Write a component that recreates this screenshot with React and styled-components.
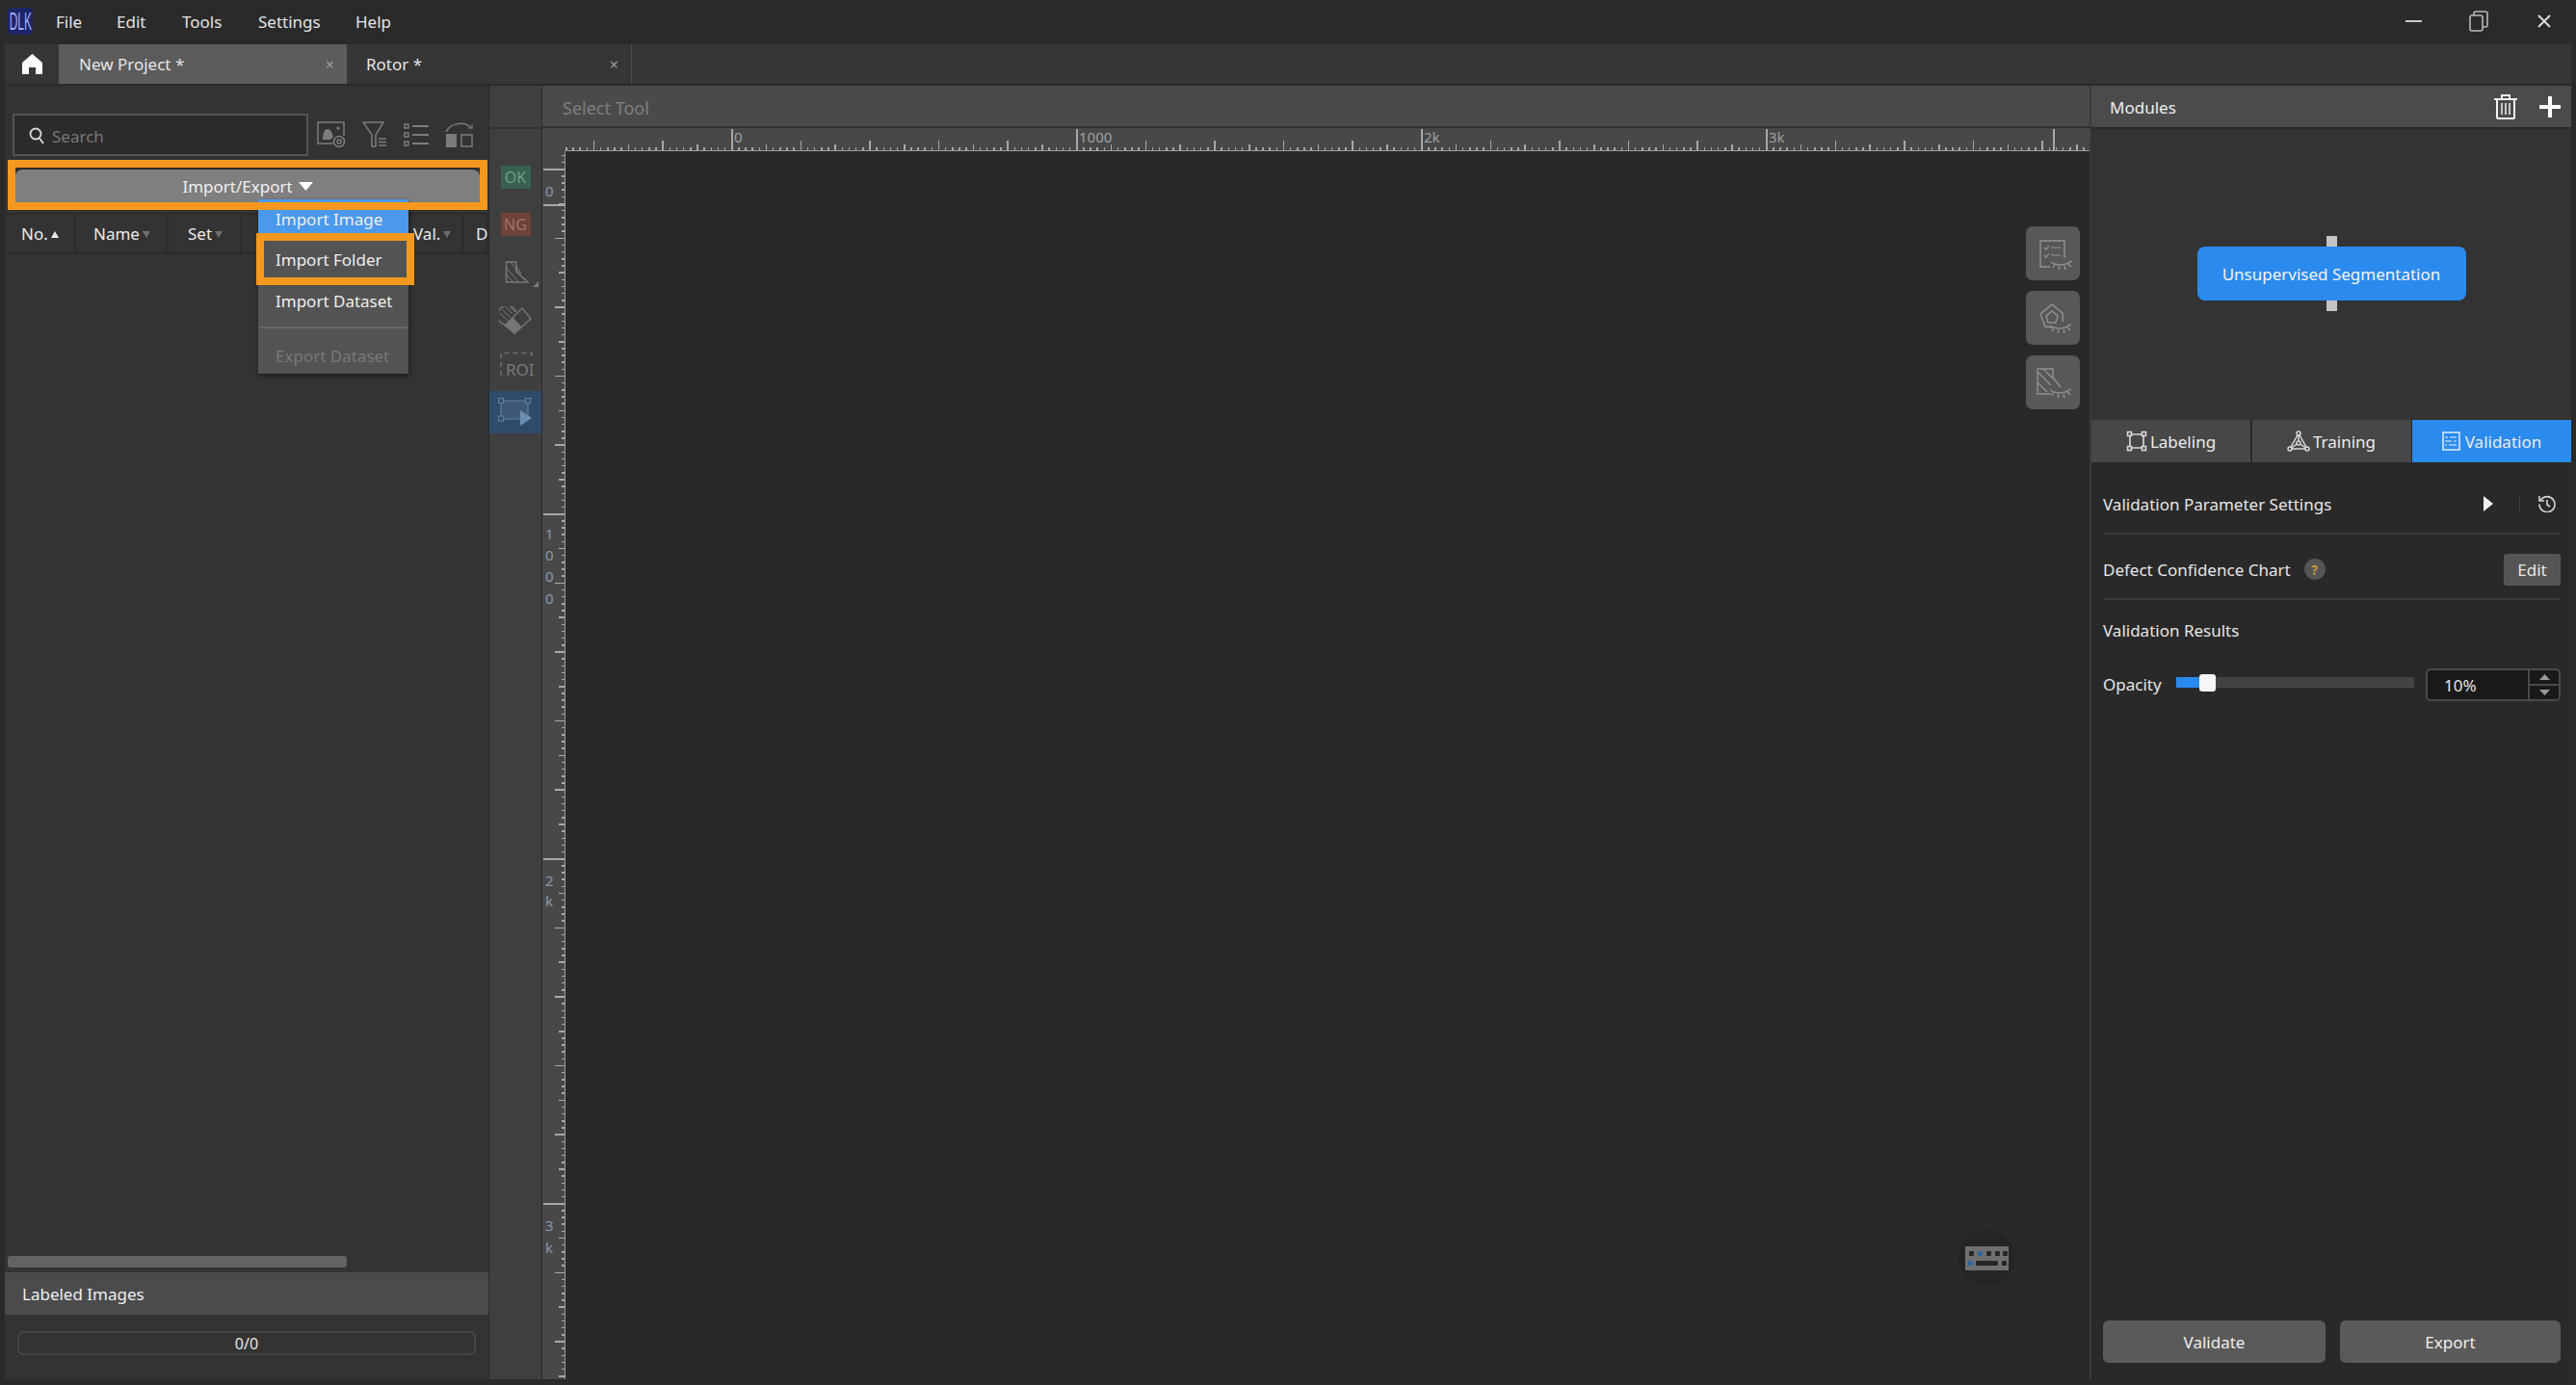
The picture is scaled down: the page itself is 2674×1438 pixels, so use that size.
import React from 'react'
import styled, { createGlobalStyle } from 'styled-components';

const GlobalStyle = createGlobalStyle`
  html, body { margin: 0; height: 100%; background: #2a2a2a; }
  #root { height: 100%; }
  * { box-sizing: border-box; }
`;

const Page = styled.div`
  width: 2674px;
  height: 1438px;
  display: flex;
  flex-direction: column;
  padding: 0 5px 6px;
  background: #2a2a2a;
  color: #e6e6e6;
  font-family: "Noto Sans", "Liberation Sans", sans-serif;
  font-size: 17px;
  overflow: hidden;
`;

const TitleBar = styled.div`
  height: 46px;
  flex: none;
  display: flex;
  align-items: center;
  padding-bottom: 2px;
`;

const Logo = styled.div`
  width: 26px;
  height: 28px;
  margin-left: 3px;
  margin-right: 24px;
  border-radius: 5px;
  background: #1d2466;
  color: #a4a8f6;
  font-family: "Liberation Sans", sans-serif;
  font-size: 26px;
  line-height: 28px;
  text-align: center;
  overflow: hidden;
  span { display: inline-block; transform: scaleX(0.46); margin: 0 -14px; }
`;

const MenuItem = styled.span`
  width: ${p => p.$w}px;
  color: #e4e4e4;
`;

const WindowControls = styled.div`
  margin-left: auto;
  display: flex;
  align-items: center;
  gap: 48px;
  padding-right: 21px;
`;

const TabBar = styled.div`
  height: 41px;
  flex: none;
  display: flex;
  background: #363636;
`;

const HomeSlot = styled.div`
  width: 56px;
  display: flex;
  align-items: center;
  justify-content: center;
`;

const Tab = styled.div`
  width: ${p => p.$w}px;
  display: flex;
  align-items: center;
  justify-content: space-between;
  padding: 0 13px 0 ${p => p.$pad}px;
  background: ${p => (p.$active ? '#5c5c5c' : 'transparent')};
  border-right: ${p => (p.$active ? 'none' : '1px solid #4c4c4c')};
`;

const TabClose = styled.span`
  color: #9c9c9c;
  font-size: 16px;
`;

const Main = styled.div`
  flex: 1;
  min-height: 0;
  margin-top: 2px;
  display: flex;
`;

/* left panel */
const LeftPanel = styled.div`
  position: relative;
  width: 502px;
  flex: none;
  display: flex;
  flex-direction: column;
  background: #333333;
`;

const SearchRow = styled.div`
  height: 44px;
  margin-top: 29px;
  flex: none;
  display: flex;
  align-items: center;
  padding-left: 8px;
`;

const SearchBox = styled.div`
  width: 307px;
  height: 44px;
  display: flex;
  align-items: center;
  gap: 8px;
  padding: 2px 0 0 15px;
  background: #2b2b2b;
  border: 2px solid #555555;
  color: #777777;
`;

const ToolIcons = styled.div`
  display: flex;
  align-items: center;
  margin-left: 9px;
  gap: 17px;
`;

const ImportRow = styled.div`
  height: 52px;
  margin-top: 4px;
  flex: none;
  padding: 8px 9px 8px 11px;
`;

const ImportButton = styled.div`
  height: 36px;
  display: flex;
  align-items: center;
  justify-content: center;
  gap: 6px;
  background: #7f7f7f;
  border-top: 2px solid #2b2b2b;
  border-radius: 8px 8px 0 0;
  color: #f0f0f0;
`;

const Highlight = styled.div`
  position: absolute;
  left: ${p => p.$l}px;
  top: ${p => p.$t}px;
  width: ${p => p.$w}px;
  height: ${p => p.$h}px;
  border: 8px solid #f4981f;
  z-index: 5;
`;

const TableHead = styled.div`
  height: 43px;
  margin-top: 3px;
  flex: none;
  display: flex;
  overflow: hidden;
  border-top: 2px solid #2b2b2b;
  border-bottom: 2px solid #2b2b2b;
`;

const HeadCell = styled.div`
  width: ${p => p.$w}px;
  flex: none;
  display: flex;
  align-items: center;
  gap: 3px;
  padding-left: ${p => p.$pad}px;
  border-right: 2px solid #2b2b2b;
  color: #ececec;
`;

const SortMark = styled.span`
  width: 0;
  height: 0;
  margin-top: 2px;
  border-left: 4px solid transparent;
  border-right: 4px solid transparent;
  ${p => (p.$up ? 'border-bottom: 7px solid #e8e8e8;' : 'border-top: 7px solid #6f6f6f;')}
`;

const TableBody = styled.div`
  flex: 1;
  display: flex;
  align-items: flex-end;
  padding: 0 0 5px 3px;
`;

const HScroll = styled.div`
  width: 352px;
  height: 12px;
  background: #636363;
  border-radius: 3px;
`;

const SectionBar = styled.div`
  height: ${p => p.$h || 44}px;
  flex: none;
  display: flex;
  align-items: center;
  padding-left: ${p => p.$pad || 18}px;
  padding-right: 11px;
  padding-top: ${p => p.$top || 0}px;
  background: #4b4b4b;
  color: #eeeeee;
`;

const ProgressWrap = styled.div`
  height: 67px;
  flex: none;
  padding: 17px 13px 0;
`;

const Progress = styled.div`
  height: 25px;
  display: flex;
  align-items: center;
  justify-content: center;
  border: 2px solid #464646;
  border-radius: 6px;
  font-size: 16px;
`;

/* dropdown */
const Dropdown = styled.div`
  position: absolute;
  left: 263px;
  top: 118px;
  width: 156px;
  height: 181px;
  z-index: 4;
  background: #535353;
  box-shadow: 1px 2px 5px rgba(0, 0, 0, 0.5);
`;

const DropItem = styled.div`
  height: ${p => p.$h}px;
  display: flex;
  align-items: center;
  padding: ${p => p.$top || 0}px 0 ${p => p.$bottom || 0}px 18px;
  background: ${p => (p.$active ? '#4a99ec' : 'transparent')};
  color: ${p => (p.$disabled ? '#787878' : '#eeeeee')};
`;

const DropDivider = styled.div`
  height: 2px;
  background: #656565;
`;

/* tool strip */
const ToolStrip = styled.div`
  width: 54px;
  margin-left: 1px;
  flex: none;
  display: flex;
  flex-direction: column;
  background: #3f3f3f;
`;

const StripHead = styled.div`
  height: 45px;
  flex: none;
  border-bottom: 2px solid #313131;
  margin-bottom: 26px;
`;

const Slot = styled.div`
  height: ${p => p.$h}px;
  flex: none;
  display: flex;
  align-items: center;
  justify-content: center;
  margin-top: ${p => p.$mt || 0}px;
  background: ${p => (p.$active ? '#2f4b6b' : 'transparent')};
`;

const Badge = styled.div`
  width: 31px;
  height: 24px;
  display: flex;
  align-items: center;
  justify-content: center;
  background: ${p => p.$bg};
  color: ${p => p.$fg};
  font-size: 16px;
`;

/* center */
const Center = styled.div`
  flex: 1;
  min-width: 0;
  margin-left: 1px;
  display: flex;
  flex-direction: column;
`;

const SelectBar = styled.div`
  height: 44px;
  flex: none;
  display: flex;
  align-items: center;
  padding: 4px 0 0 21px;
  background: #4a4a4a;
  border-bottom: 2px solid #313131;
  color: #7e7e7e;
  font-size: 18px;
`;

const TopRuler = styled.div`
  height: 24px;
  flex: none;
  background: #484848;
  svg { display: block; }
`;

const CanvasRow = styled.div`
  flex: 1;
  min-height: 0;
  display: flex;
`;

const LeftRuler = styled.div`
  width: 24px;
  flex: none;
  background: #484848;
  svg { display: block; }
`;

const Canvas = styled.div`
  position: relative;
  flex: 1;
  background: #292929;
`;

const FloatButtons = styled.div`
  position: absolute;
  right: 10px;
  top: 78px;
  display: flex;
  flex-direction: column;
  gap: 11px;
`;

const FloatButton = styled.div`
  width: 56px;
  height: 56px;
  display: flex;
  align-items: center;
  justify-content: center;
  border-radius: 7px;
  background: #585858;
`;

const KeyboardBadge = styled.div`
  position: absolute;
  left: 1446px;
  top: 1120px;
  width: 58px;
  height: 58px;
  display: flex;
  align-items: center;
  justify-content: center;
  border-radius: 50%;
  background: #252525;
`;

/* right panel */
const RightPanel = styled.div`
  width: 500px;
  flex: none;
  display: flex;
  flex-direction: column;
  background: #292929;
  border-left: 2px solid #3a3a3a;
`;

const HeaderIcons = styled.div`
  margin-left: auto;
  display: flex;
  align-items: center;
  gap: 23px;
`;

const ModuleArea = styled.div`
  height: 302px;
  margin-top: 2px;
  flex: none;
  display: flex;
  align-items: center;
  justify-content: center;
  background: #333333;
  padding-bottom: 2px;
`;

const ModuleNode = styled.div`
  position: relative;
  width: 279px;
  height: 56px;
  display: flex;
  align-items: center;
  justify-content: center;
  border-radius: 8px;
  background: #2b8aed;
  color: #f4f4f4;
  &::before, &::after {
    content: '';
    position: absolute;
    left: 134px;
    width: 11px;
    height: 11px;
    background: #c4c4c4;
  }
  &::before { top: -11px; }
  &::after { bottom: -11px; }
`;

const ModeTabs = styled.div`
  height: 44px;
  flex: none;
  display: flex;
  justify-content: space-between;
`;

const ModeTab = styled.div`
  width: 165px;
  display: flex;
  align-items: center;
  justify-content: center;
  gap: ${p => p.$gap || 3}px;
  background: ${p => (p.$active ? '#2b8aed' : '#474747')};
  color: #ececec;
`;

const Rows = styled.div`
  flex: 1;
  display: flex;
  flex-direction: column;
  padding: 0 11px 17px 12px;
`;

const SettingRow = styled.div`
  height: ${p => p.$h}px;
  flex: none;
  display: flex;
  align-items: center;
  padding-top: ${p => p.$pt || 0}px;
  padding-bottom: ${p => p.$pb || 0}px;
  border-bottom: ${p => (p.$line ? '2px solid #3a3a3a' : 'none')};
`;

const RowEnd = styled.div`
  margin-left: auto;
  display: flex;
  align-items: center;
  padding-right: ${p => p.$pr || 0}px;
`;

const Separator = styled.span`
  width: 1px;
  height: 16px;
  margin: 0 19px 0 27px;
  background: #3f3f3f;
`;

const HelpDot = styled.span`
  width: 22px;
  height: 22px;
  margin-left: 14px;
  display: flex;
  align-items: center;
  justify-content: center;
  border-radius: 50%;
  background: #555555;
  color: #c79a3a;
  font-size: 14px;
  font-weight: 700;
`;

const EditButton = styled.div`
  width: 59px;
  height: 33px;
  margin-top: 1px;
  display: flex;
  align-items: center;
  justify-content: center;
  border-radius: 3px;
  background: #555555;
`;

const OpacityLabel = styled.span`
  margin-bottom: 2px;
`;

const Slider = styled.div`
  position: relative;
  width: 247px;
  height: 11px;
  margin: 0 0 6px 15px;
  background: #434343;
`;

const SliderFill = styled.div`
  height: 100%;
  background: #2b8aed;
`;

const SliderThumb = styled.div`
  position: absolute;
  top: -3px;
  width: 17px;
  height: 18px;
  border-radius: 3px;
  background: #f6f6f6;
`;

const NumberInput = styled.div`
  width: 140px;
  height: 34px;
  margin-left: auto;
  display: flex;
  background: #191919;
  border: 2px solid #4a4a4a;
  border-radius: 5px;
`;

const NumberValue = styled.div`
  flex: 1;
  display: flex;
  align-items: center;
  padding-left: 17px;
`;

const Spinner = styled.div`
  width: 32px;
  display: flex;
  flex-direction: column;
  border-left: 2px solid #4a4a4a;
`;

const SpinCell = styled.div`
  flex: 1;
  display: flex;
  align-items: center;
  justify-content: center;
  border-top: ${p => (p.$line ? '2px solid #4a4a4a' : 'none')};
`;

const Spacer = styled.div`
  flex: 1;
`;

const Actions = styled.div`
  height: 44px;
  flex: none;
  display: flex;
  justify-content: space-between;
`;

const ActionButton = styled.div`
  width: ${p => p.$w}px;
  display: flex;
  align-items: center;
  justify-content: center;
  border-radius: 6px;
  background: #5a5a5a;
  color: #eeeeee;
`;

const range = (from, to, step) => {
  const out = [];
  for (let v = from; v <= to; v += step) out.push(v);
  return out;
};

const RULER_W = 1606;
const RULER_H = 1275;
const STEP = 358 / 50;

const tickLen = i => {
  if (i % 50 === 0) return 22;
  if (i % 10 === 0) return 10;
  if (i % 5 === 0) return 6;
  return 3;
};

const HorizontalRuler = () => {
  const ticks = range(-24, 196, 1).map(i => ({ x: 196 + i * STEP, i }));
  return (
    <svg width={RULER_W} height="24" shapeRendering="crispEdges">
      <rect x="24" y="22.5" width={RULER_W - 24} height="1.5" fill="#9c9c9c" />
      {ticks.filter(t => t.x > 24 && t.x < RULER_W).map(t => (
        <rect key={t.i} x={t.x} y={23 - tickLen(t.i)} width="1.5" height={tickLen(t.i)} fill="#a8a8a8" />
      ))}
      <rect x="1568" y="1" width="1.5" height="22" fill="#a8a8a8" />
      <text x="199" y="15" fill="#a0a0a0" fontSize="15" fontFamily="Noto Sans">0</text>
      <text x="557" y="15" fill="#a0a0a0" fontSize="15" fontFamily="Noto Sans">1000</text>
      <text x="915" y="15" fill="#a0a0a0" fontSize="15" fontFamily="Noto Sans">2k</text>
      <text x="1273" y="15" fill="#a0a0a0" fontSize="15" fontFamily="Noto Sans">3k</text>
    </svg>
  );
};

const VLABELS = [
  ['0', 41], ['1', 397], ['0', 419], ['0', 441], ['0', 464],
  ['2', 757], ['k', 778], ['3', 1115], ['k', 1138],
];

const VerticalRuler = () => {
  const ticks = range(-2, 175, 1).map(i => ({ y: 18 + i * STEP, i }));
  return (
    <svg width="24" height={RULER_H} shapeRendering="crispEdges">
      <rect x="22.5" y="0" width="1.5" height={RULER_H} fill="#9c9c9c" />
      {ticks.filter(t => t.y > 0 && t.y < RULER_H).map(t => (
        <rect key={t.i} x={23 - tickLen(t.i)} y={t.y} width={tickLen(t.i)} height="1.5" fill="#a8a8a8" />
      ))}
      <rect x="1" y="55" width="22" height="1.5" fill="#a8a8a8" />
      {VLABELS.map(([c, y], i) => (
        <text key={i} x="3" y={y + 6} fill="#8c98a8" fontSize="15" fontFamily="Noto Sans">{c}</text>
      ))}
    </svg>
  );
};

const gray = '#7c7c7c';

const Home = () => (
  <svg width="21" height="21" viewBox="0 0 21 21"><path d="M10.5 0 21 9v12h-7v-7H7v7H0V9z" fill="#fff" /></svg>
);

const Minimize = () => (
  <svg width="18" height="18" viewBox="0 0 18 18"><rect x="0" y="8" width="17" height="2" fill="#c8c8c8" /></svg>
);

const Restore = () => (
  <svg width="23" height="22" viewBox="0 0 23 22" fill="none" stroke="#b8b8b8" strokeWidth="1.6">
    <rect x="1" y="5" width="13" height="16" rx="2" />
    <path d="M5 5V3a2 2 0 0 1 2-2h10a2 2 0 0 1 2 2v12a2 2 0 0 1-2 2h-3" />
  </svg>
);

const CloseX = () => (
  <svg width="14" height="14" viewBox="0 0 14 14" stroke="#e0e0e0" strokeWidth="1.8"><path d="M1 1l12 12M13 1 1 13" /></svg>
);

const SearchGlass = () => (
  <svg width="16" height="18" viewBox="0 0 16 18" fill="none" stroke="#dcdcdc" strokeWidth="1.8">
    <circle cx="7" cy="7" r="5.5" /><path d="M11 11.5 15 17" />
  </svg>
);

const ImageGear = () => (
  <svg width="30" height="28" viewBox="0 0 30 28" fill="none" stroke={gray} strokeWidth="1.5">
    <path d="M17 23H1V1h27v14" />
    <path d="M6 19c0-5 1-11 5-11s5 5 6 8l-3 3z" fill={gray} stroke="none" />
    <circle cx="22" cy="7" r="1.6" fill={gray} stroke="none" />
    <circle cx="23" cy="21" r="5.5" /><circle cx="23" cy="21" r="2" />
  </svg>
);

const Funnel = () => (
  <svg width="26" height="28" viewBox="0 0 26 28" fill="none" stroke={gray} strokeWidth="1.5">
    <path d="M1 1h21l-8 13v12h-4V14z" />
    <path d="M17 18h8M17 21.500h8M17 25h8" />
  </svg>
);

const ListIcon = () => (
  <svg width="26" height="26" viewBox="0 0 26 26" fill="none" stroke={gray} strokeWidth="1.5">
    <rect x="1" y="2" width="4" height="4" /><rect x="1" y="11" width="4" height="4" /><rect x="1" y="20" width="4" height="4" />
    <path d="M9 4h17M9 13h17M9 22h17" strokeWidth="2" />
  </svg>
);

const SplitIcon = () => (
  <svg width="29" height="28" viewBox="0 0 29 28" fill="none" stroke={gray} strokeWidth="1.5">
    <path d="M1 11C5 2 20 -1 27 7" /><path d="M24 7h4V3" strokeWidth="1.2" />
    <rect x="1" y="13" width="11" height="14" fill={gray} stroke="none" />
    <rect x="17" y="14" width="11" height="12" />
  </svg>
);

const Caret = () => (
  <svg width="15" height="9" viewBox="0 0 15 9"><path d="M0 0h15L7.500 9z" fill="#fff" /></svg>
);

const PolyTool = () => (
  <svg width="48" height="34" viewBox="0 0 48 34" fill="none" stroke="#7a7a7a" strokeWidth="1.5">
    <path d="M14.500 7H25v10l12 11H14.500z" />
    <path d="M14.500 13l13 15M14.500 20l7 8M19 7l13 17M24 10l6 9" strokeWidth="1" />
    <path d="M48 27v6h-6z" fill="#7a7a7a" stroke="none" />
  </svg>
);

const EraserTool = () => (
  <svg width="34" height="29" viewBox="0 0 34 29" fill="none" stroke="#757575" strokeWidth="1.4">
    <path d="M6 19A10 10 0 1 1 18 6" />
    <path d="M1 7l8 8M3 3l9 9M7 1l7 7M12 1l5 5" strokeWidth="1" />
    <path d="M24 2l9 11-17 15-10-8z" />
    <path d="M6 20l9-8 9 10-8 6z" fill="#757575" stroke="none" />
  </svg>
);

const RoiTool = () => (
  <svg width="44" height="36" viewBox="0 -4 44 36">
    <path d="M7 7V1.500h32v5" fill="none" stroke="#707070" strokeWidth="1.5" strokeDasharray="5 4" />
    <path d="M7 11v16" fill="none" stroke="#707070" strokeWidth="1.5" strokeDasharray="5 4" />
    <text x="12" y="25" fill="#7a7a7a" fontSize="17" fontFamily="Noto Sans">ROI</text>
  </svg>
);

const RegionPlay = () => (
  <svg width="36" height="30" viewBox="0 0 36 30" fill="none" stroke="#5f7f9f" strokeWidth="1.2">
    <rect x="3" y="3" width="28" height="19" fill="#3d5877" stroke="none" />
    <path d="M3 3h28v19H3z" />
    <rect x="0.500" y="0.500" width="5" height="5" fill="#2f4b6b" />
    <rect x="28.500" y="0.500" width="5" height="5" fill="#2f4b6b" />
    <rect x="0.500" y="19" width="5" height="5" fill="#2f4b6b" />
    <path d="M23 13l12 8-12 8z" fill="#6f8fb0" stroke="none" />
  </svg>
);

const Lashes = ({ x, y }) => (
  <path transform={`translate(${x} ${y})`} d="M0 1c5 4 15 4 21-1M4 3 2 7M9 5l-1 4M14 5l1 4M18 3l3 3M20 1l2-1" strokeWidth="1.300" />
);

const ChecklistEye = () => (
  <svg width="40" height="36" viewBox="0 0 40 36" fill="none" stroke="#929292" strokeWidth="1.4">
    <path d="M32 23V5H7v27h10" />
    <path d="M11 12l2 2 3-4M11 20l2 2 3-4M18 12h10M18 20h10" strokeWidth="1.200" />
    <Lashes x={18} y={26} />
  </svg>
);

const PentagonEye = () => (
  <svg width="40" height="36" viewBox="0 0 40 36" fill="none" stroke="#929292" strokeWidth="1.4">
    <path d="M30.500 22 30 13 19 4 7 14l5 13 7 1" />
    <path d="M19 11l6 5-2 7h-8l-2-7z" />
    <Lashes x={17} y={25} />
  </svg>
);

const ShapeEye = () => (
  <svg width="40" height="36" viewBox="0 0 40 36" fill="none" stroke="#929292" strokeWidth="1.4">
    <path d="M18 30H4V4h16v9l8 10" />
    <path d="M4 7l14 14M4 18l10 10M10 4l10 10" strokeWidth="1.200" />
    <Lashes x={17} y={25} />
  </svg>
);

const Keyboard = () => (
  <svg width="45" height="25" viewBox="0 0 45 25">
    <rect width="45" height="25" fill="#6f6f6f" />
    {[4, 13, 22, 31, 39].map((x, i) => (
      <rect key={x} x={x} y="5" width="5" height="5" rx="1" fill={i === 1 ? '#2e66a0' : '#262626'} />
    ))}
    <rect x="3" y="15" width="5" height="5" rx="1" fill="#2e66a0" />
    <rect x="11" y="15" width="23" height="5" rx="1" fill="#262626" />
    <rect x="38" y="15" width="5" height="5" rx="1" fill="#262626" />
  </svg>
);

const Trash = () => (
  <svg width="24" height="26" viewBox="0 0 24 26" fill="none" stroke="#f2f2f2" strokeWidth="2">
    <path d="M0 5h24M8 5V1h8v4M3 5v19a1 1 0 0 0 1 1h16a1 1 0 0 0 1-1V5" />
    <path d="M8 9v12M12 9v12M16 9v12" strokeWidth="1.5" />
  </svg>
);

const Plus = () => (
  <svg width="22" height="22" viewBox="0 0 22 22"><path d="M9 0h4v9h9v4h-9v9H9v-9H0V9h9z" fill="#fff" /></svg>
);

const LabelingIcon = () => (
  <svg width="22" height="22" viewBox="0 0 22 22" fill="none" stroke="#d8d8d8" strokeWidth="1.6">
    <path d="M4 4h14v14H4z" />
    <rect x="1.500" y="1.500" width="4" height="4" fill="#474747" /><rect x="16.500" y="1.500" width="4" height="4" fill="#474747" />
    <rect x="1.500" y="16.500" width="4" height="4" fill="#474747" /><rect x="16.500" y="16.500" width="4" height="4" fill="#474747" />
  </svg>
);

const TrainingIcon = () => (
  <svg width="24" height="22" viewBox="0 0 24 22" fill="none" stroke="#d8d8d8" strokeWidth="1.5">
    <path d="M12 3 3 19h18zM12 3v10M3 19l9-6 9 6" />
    <circle cx="12" cy="3" r="2" fill="#474747" /><circle cx="3" cy="19" r="2" fill="#474747" />
    <circle cx="21" cy="19" r="2" fill="#474747" /><circle cx="12" cy="13" r="2" fill="#474747" />
  </svg>
);

const ValidationIcon = () => (
  <svg width="19" height="20" viewBox="0 0 19 20" fill="none" stroke="#eef5fd" strokeWidth="1.4">
    <rect x="1" y="1" width="17" height="18" />
    <path d="M3 6h3M8 6h7M3 10h7M12 10h3M3 14h2M7 14h8" strokeWidth="1.200" />
  </svg>
);

const Play = () => (
  <svg width="10" height="16" viewBox="0 0 10 16"><path d="M0 0l10 8-10 8z" fill="#f2f2f2" /></svg>
);

const HistoryIcon = () => (
  <svg width="18" height="18" viewBox="0 0 18 18" fill="none" stroke="#d4d4d4" strokeWidth="1.600">
    <path d="M2.500 5A8 8 0 1 1 1 9.500" /><path d="M1 1v5h5" /><path d="M9 5v5l3 2" />
  </svg>
);

const SpinArrow = ({ up }) => (
  <svg width="11" height="6" viewBox="0 0 11 6"><path d={up ? 'M0 6h11L5.500 0z' : 'M0 0h11L5.500 6z'} fill="#9a9a9a" /></svg>
);

const App = () => {
  return (
    <Page>
      <GlobalStyle />
      <TitleBar>
        <Logo><span>DLK</span></Logo>
        <MenuItem $w={63}>File</MenuItem>
        <MenuItem $w={68}>Edit</MenuItem>
        <MenuItem $w={79}>Tools</MenuItem>
        <MenuItem $w={101}>Settings</MenuItem>
        <MenuItem $w={60}>Help</MenuItem>
        <WindowControls>
          <Minimize />
          <Restore />
          <CloseX />
        </WindowControls>
      </TitleBar>

      <TabBar>
        <HomeSlot><Home /></HomeSlot>
        <Tab $w={299} $pad={21} $active>New Project *<TabClose>×</TabClose></Tab>
        <Tab $w={296} $pad={20}>Rotor *<TabClose>×</TabClose></Tab>
      </TabBar>

      <Main>
        <LeftPanel>
          <SearchRow>
            <SearchBox><SearchGlass />Search</SearchBox>
            <ToolIcons>
              <ImageGear />
              <Funnel />
              <ListIcon />
              <SplitIcon />
            </ToolIcons>
          </SearchRow>
          <ImportRow>
            <ImportButton>Import/Export <Caret /></ImportButton>
          </ImportRow>
          <TableHead>
            <HeadCell $w={74} $pad={17}>No.<SortMark $up /></HeadCell>
            <HeadCell $w={96} $pad={18}>Name<SortMark /></HeadCell>
            <HeadCell $w={76} $pad={20}>Set<SortMark /></HeadCell>
            <HeadCell $w={170} $pad={10} />
            <HeadCell $w={60} $pad={8}>Val.<SortMark /></HeadCell>
            <HeadCell $w={26} $pad={13}>D</HeadCell>
          </TableHead>
          <TableBody><HScroll /></TableBody>
          <SectionBar>Labeled Images</SectionBar>
          <ProgressWrap><Progress>0/0</Progress></ProgressWrap>

          <Dropdown>
            <DropItem $h={35} $active $top={6}>Import Image</DropItem>
            <DropItem $h={54}>Import Folder</DropItem>
            <DropItem $h={43} $bottom={11}>Import Dataset</DropItem>
            <DropDivider />
            <DropItem $h={47} $top={9} $disabled>Export Dataset</DropItem>
          </Dropdown>
          <Highlight $l={3} $t={77} $w={498} $h={52} />
          <Highlight $l={261} $t={153} $w={164} $h={54} />
        </LeftPanel>

        <ToolStrip>
          <StripHead />
          <Slot $h={48}><Badge $bg="#39614f" $fg="#6f9f8a">OK</Badge></Slot>
          <Slot $h={50}><Badge $bg="#6e4238" $fg="#a0736a">NG</Badge></Slot>
          <Slot $h={48}><PolyTool /></Slot>
          <Slot $h={52}><EraserTool /></Slot>
          <Slot $h={42}><RoiTool /></Slot>
          <Slot $h={44} $mt={6} $active><RegionPlay /></Slot>
        </ToolStrip>

        <Center>
          <SelectBar>Select Tool</SelectBar>
          <TopRuler><HorizontalRuler /></TopRuler>
          <CanvasRow>
            <LeftRuler><VerticalRuler /></LeftRuler>
            <Canvas>
              <FloatButtons>
                <FloatButton><ChecklistEye /></FloatButton>
                <FloatButton><PentagonEye /></FloatButton>
                <FloatButton><ShapeEye /></FloatButton>
              </FloatButtons>
              <KeyboardBadge><Keyboard /></KeyboardBadge>
            </Canvas>
          </CanvasRow>
        </Center>

        <RightPanel>
          <SectionBar $h={43} $pad={19} $top={1}>
            Modules
            <HeaderIcons><Trash /><Plus /></HeaderIcons>
          </SectionBar>
          <ModuleArea><ModuleNode>Unsupervised Segmentation</ModuleNode></ModuleArea>
          <ModeTabs>
            <ModeTab><LabelingIcon />Labeling</ModeTab>
            <ModeTab><TrainingIcon />Training</ModeTab>
            <ModeTab $active $gap={5}><ValidationIcon />Validation</ModeTab>
          </ModeTabs>
          <Rows>
            <SettingRow $h={75} $pt={13} $line>
              Validation Parameter Settings
              <RowEnd $pr={5}><Play /><Separator /><HistoryIcon /></RowEnd>
            </SettingRow>
            <SettingRow $h={68} $pt={6} $line>
              Defect Confidence Chart
              <HelpDot>?</HelpDot>
              <RowEnd><EditButton>Edit</EditButton></RowEnd>
            </SettingRow>
            <SettingRow $h={64} $pb={2}>Validation Results</SettingRow>
            <SettingRow $h={48}>
              <OpacityLabel>Opacity</OpacityLabel>
              <Slider>
                <SliderFill style={{ width: '10%' }} />
                <SliderThumb style={{ left: '10%' }} />
              </Slider>
              <NumberInput>
                <NumberValue>10%</NumberValue>
                <Spinner>
                  <SpinCell><SpinArrow up /></SpinCell>
                  <SpinCell $line><SpinArrow /></SpinCell>
                </Spinner>
              </NumberInput>
            </SettingRow>
            <Spacer />
            <Actions>
              <ActionButton $w={231}>Validate</ActionButton>
              <ActionButton $w={229}>Export</ActionButton>
            </Actions>
          </Rows>
        </RightPanel>
      </Main>
    </Page>
  );
};

export default App;
